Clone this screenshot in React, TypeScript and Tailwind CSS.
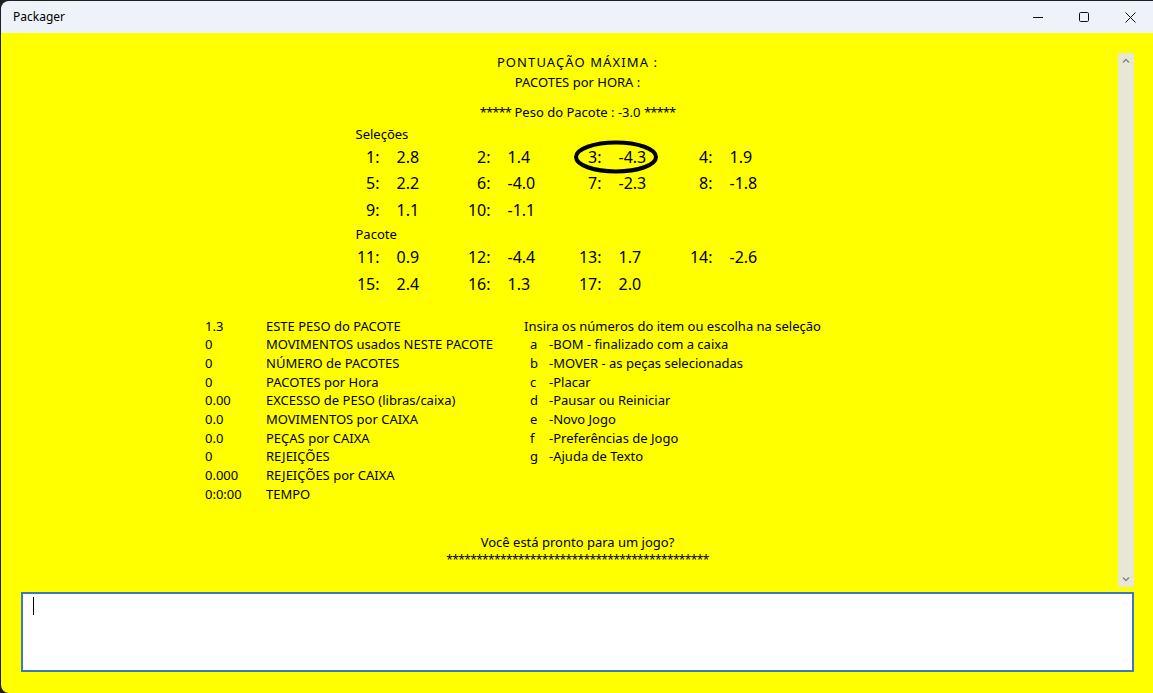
import React from "react";

const font = { fontFamily: '"Noto Sans", "Open Sans", sans-serif' };

const selecoes: [string, string][][] = [
    [["1:", "2.8"], ["2:", "1.4"], ["3:", "-4.3"], ["4:", "1.9"]],
    [["5:", "2.2"], ["6:", "-4.0"], ["7:", "-2.3"], ["8:", "-1.8"]],
    [["9:", "1.1"], ["10:", "-1.1"]],
];

const pacote: [string, string][][] = [
    [["11:", "0.9"], ["12:", "-4.4"], ["13:", "1.7"], ["14:", "-2.6"]],
    [["15:", "2.4"], ["16:", "1.3"], ["17:", "2.0"]],
];

const stats: [string, string][] = [
    ["1.3", "ESTE PESO do PACOTE"],
    ["0", "MOVIMENTOS usados NESTE PACOTE"],
    ["0", "NÚMERO de PACOTES"],
    ["0", "PACOTES por Hora"],
    ["0.00", "EXCESSO de PESO (libras/caixa)"],
    ["0.0", "MOVIMENTOS por CAIXA"],
    ["0.0", "PEÇAS por CAIXA"],
    ["0", "REJEIÇÕES"],
    ["0.000", "REJEIÇÕES por CAIXA"],
    ["0:0:00", "TEMPO"],
];

const menu: [string, string][] = [
    ["a", "-BOM - finalizado com a caixa"],
    ["b", "-MOVER - as peças selecionadas"],
    ["c", "-Placar"],
    ["d", "-Pausar ou Reiniciar"],
    ["e", "-Novo Jogo"],
    ["f", "-Preferências de Jogo"],
    ["g", "-Ajuda de Texto"],
];

function GridRow({ cells, h }: { cells: [string, string][]; h: string }) {
    return (
        <div className={`flex ${h} items-center text-[16px]`}>
            {cells.map(([label, value]) => (
                <div key={label} className="relative flex w-[111px] items-center">
                    <span className="w-[24px] text-right">{label}</span>
                    <span className="ml-[17px]">{value}</span>
                    {label === "3:" && (
                        // selected item marker
                        <svg
                            className="absolute left-[-5px] top-1/2 -translate-y-1/2"
                            width="86"
                            height="34"
                            viewBox="0 0 86 34"
                        >
                            <ellipse cx="43" cy="17" rx="40" ry="14.5" fill="none" stroke="#000" strokeWidth="4" />
                        </svg>
                    )}
                </div>
            ))}
        </div>
    );
}

export default function App() {
    return (
        <div className="h-[693px] w-[1153px] overflow-hidden bg-[#202020]" style={font}>
            <div className="ml-[1px] mt-[1px] flex h-[692px] w-[1152px] flex-col overflow-hidden rounded-tl-[8px] rounded-bl-[8px] text-black">
                {/* title bar */}
                <div className="flex h-[32px] shrink-0 items-center bg-[#edf3f8] text-[12px]">
                    <span className="ml-[12px]">Packager</span>
                    <div className="ml-auto flex h-full items-center">
                        <div className="flex h-full w-[46px] items-center justify-center">
                            <svg width="10" height="10" viewBox="0 0 10 10">
                                <path d="M0 5.5h10" stroke="#111" strokeWidth="1" />
                            </svg>
                        </div>
                        <div className="flex h-full w-[46px] items-center justify-center">
                            <svg width="10" height="10" viewBox="0 0 10 10">
                                <rect x="0.5" y="0.5" width="9" height="9" rx="1.2" fill="none" stroke="#111" strokeWidth="1" />
                            </svg>
                        </div>
                        <div className="flex h-full w-[46px] items-center justify-center">
                            <svg width="11" height="11" viewBox="0 0 11 11">
                                <path d="M0.5 0.5l10 10M10.5 0.5l-10 10" stroke="#111" strokeWidth="1" />
                            </svg>
                        </div>
                    </div>
                </div>

                {/* client */}
                <div className="flex flex-1 flex-col bg-[#ffff00] pl-[20px] pr-[19px] pt-[20px]">
                    <div className="flex h-[534px]">
                        <div className="flex flex-1 flex-col items-center pl-[16px] text-[13px]">
                            <div className="mt-[-1px] leading-[20px] tracking-[1.1px]">PONTUAÇÃO MÁXIMA :</div>
                            <div className="leading-[20px]">PACOTES por HORA :</div>
                            <div className="mt-[10px] leading-[20px]">
                                <span className="tracking-[-0.9px]">*****</span> Peso do Pacote : -3.0{" "}
                                <span className="tracking-[-0.9px]">*****</span>
                            </div>

                            <div className="mt-[2px] flex w-[444px] flex-col">
                                <div className="leading-[20px]">Seleções</div>
                                <GridRow cells={selecoes[0]} h="h-[26px]" />
                                <GridRow cells={selecoes[1]} h="h-[26px]" />
                                <GridRow cells={selecoes[2]} h="h-[27px]" />
                                <div className="mt-[1px] leading-[20px]">Pacote</div>
                                <GridRow cells={pacote[0]} h="h-[26px]" />
                                <GridRow cells={pacote[1]} h="h-[27px]" />
                            </div>

                            <div className="mt-[20px] flex w-full pl-[168px]">
                                <div className="flex w-[319px] flex-col">
                                    {stats.map(([v, l]) => (
                                        <div key={l} className="flex h-[18.7px] items-center">
                                            <span className="w-[61px]">{v}</span>
                                            <span>{l}</span>
                                        </div>
                                    ))}
                                </div>
                                <div className="flex flex-col">
                                    <div className="flex h-[18.7px] items-center">Insira os números do item ou escolha na seleção</div>
                                    {menu.map(([k, l]) => (
                                        <div key={k} className="flex h-[18.7px] items-center">
                                            <span className="w-[25px] pl-[6px]">{k}</span>
                                            <span>{l}</span>
                                        </div>
                                    ))}
                                </div>
                            </div>

                            <div className="mt-[28px] leading-[20px]">Você está pronto para um jogo?</div>
                            <div className="text-[12px] leading-[16px] tracking-[-0.65px]">
                                ********************************************
                            </div>
                        </div>
                        {/* scrollbar */}
                        <div className="flex w-[16px] flex-col items-center justify-between bg-[#e8e6d4] py-[5px]">
                            <svg width="8" height="6" viewBox="0 0 8 6">
                                <path d="M1 4.5l3-3 3 3" fill="none" stroke="#888" strokeWidth="1.5" />
                            </svg>
                            <svg width="8" height="6" viewBox="0 0 8 6">
                                <path d="M1 1.5l3 3 3-3" fill="none" stroke="#888" strokeWidth="1.5" />
                            </svg>
                        </div>
                    </div>

                    {/* input */}
                    <div className="mt-[5px] h-[80px] border-2 border-[#3a79c0] bg-white pl-[10px] pt-[3px]">
                        <div className="h-[18px] w-[1px] bg-black" />
                    </div>
                </div>
            </div>
        </div>
    );
}
